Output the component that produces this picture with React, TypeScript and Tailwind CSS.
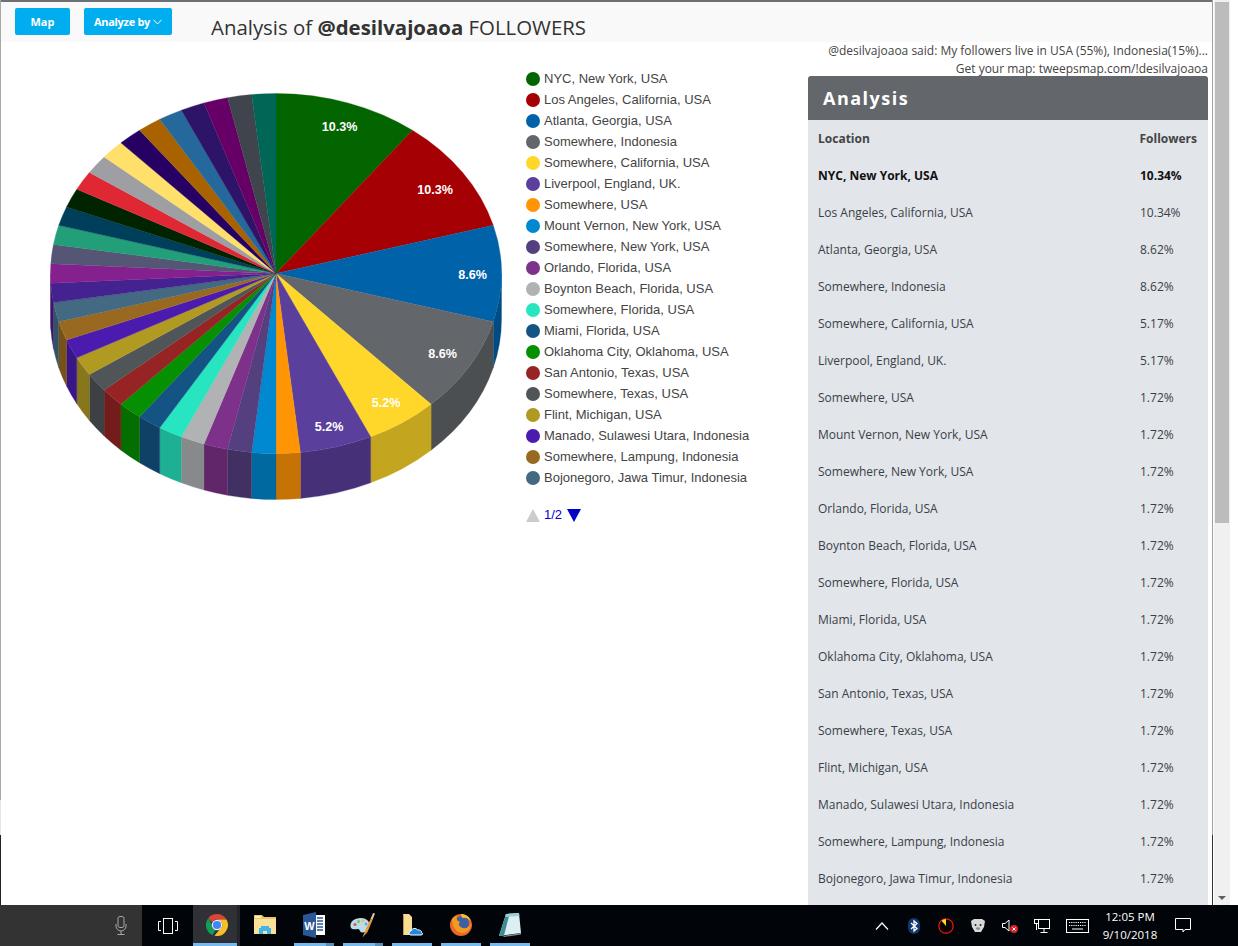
import React from 'react';

const legend = [
  ['NYC, New York, USA', '#026500', '10.34%'],
  ['Los Angeles, California, USA', '#A50003', '10.34%'],
  ['Atlanta, Georgia, USA', '#0062A8', '8.62%'],
  ['Somewhere, Indonesia', '#63666A', '8.62%'],
  ['Somewhere, California, USA', '#FFD62A', '5.17%'],
  ['Liverpool, England, UK.', '#5B3F9D', '5.17%'],
  ['Somewhere, USA', '#FF9505', '1.72%'],
  ['Mount Vernon, New York, USA', '#0089D0', '1.72%'],
  ['Somewhere, New York, USA', '#54407F', '1.72%'],
  ['Orlando, Florida, USA', '#7E318A', '1.72%'],
  ['Boynton Beach, Florida, USA', '#B0B2B3', '1.72%'],
  ['Somewhere, Florida, USA', '#26E5C0', '1.72%'],
  ['Miami, Florida, USA', '#135485', '1.72%'],
  ['Oklahoma City, Oklahoma, USA', '#068F00', '1.72%'],
  ['San Antonio, Texas, USA', '#962424', '1.72%'],
  ['Somewhere, Texas, USA', '#505558', '1.72%'],
  ['Flint, Michigan, USA', '#B19A22', '1.72%'],
  ['Manado, Sulawesi Utara, Indonesia', '#4B1BB0', '1.72%'],
  ['Somewhere, Lampung, Indonesia', '#9A6921', '1.72%'],
  ['Bojonegoro, Jawa Timur, Indonesia', '#436A82', '1.72%'],
];

// the 16 slices of page two of the legend
const moreColors = [
  '#44228F', '#85208F', '#555676', '#229E78', '#003F5C', '#002400', '#E02835', '#9D9FA2',
  '#FFE06B', '#260062', '#A86200', '#24689C', '#2E1468', '#660066', '#3F444D', '#006655',
];

const counts = [6, 6, 5, 5, 3, 3];
const cx = 276;
const cy = 273.5;
const rx = 225.5;
const ry = 180;
const depth = 46;

function pt(deg: number, dy = 0) {
  const r = (deg * Math.PI) / 180;
  return `${(cx + rx * Math.sin(r)).toFixed(2)} ${(cy - ry * Math.cos(r) + dy).toFixed(2)}`;
}

function darken(hex: string) {
  const n = parseInt(hex.slice(1), 16);
  const c = (v: number) => Math.round(v * 0.77).toString(16).padStart(2, '0');
  return `#${c(n >> 16)}${c((n >> 8) & 255)}${c(n & 255)}`;
}

function buildSlices() {
  const colors = [...legend.map((l) => l[1]), ...moreColors];
  let at = 0;
  return colors.map((color, i) => {
    const a = (at / 58) * 360;
    at += counts[i] ?? 1;
    const b = (at / 58) * 360;
    return { color, a, b };
  });
}

function Pie() {
  const slices = buildSlices();
  const labels = [
    ['10.3%', 339.5, 131], ['10.3%', 435, 194], ['8.6%', 472.5, 279],
    ['8.6%', 442.5, 358], ['5.2%', 386, 407], ['5.2%', 329, 431],
  ] as const;
  return (
    <svg width="480" height="430" viewBox="40 84 480 430" className="ml-[39px] mt-[42px] shrink-0">
      {slices.map((s, i) => {
        const a = Math.max(s.a, 90);
        const b = Math.min(s.b, 270);
        if (a >= b) return null;
        const d = `M${pt(a)} A${rx} ${ry} 0 0 1 ${pt(b)} L${pt(b, depth)} A${rx} ${ry} 0 0 0 ${pt(a, depth)} Z`;
        return <path key={i} d={d} fill={darken(s.color)} stroke={darken(s.color)} strokeWidth="0.3" />;
      })}
      {slices.map((s, i) => (
        <path
          key={i}
          d={`M${cx} ${cy} L${pt(s.a)} A${rx} ${ry} 0 0 1 ${pt(s.b)} Z`}
          fill={s.color}
          stroke={s.color}
          strokeWidth="0.3"
        />
      ))}
      {labels.map(([t, x, y], i) => (
        <text
          key={i}
          x={x}
          y={y}
          textAnchor="middle"
          fill="#fff"
          className="font-['Liberation_Sans',sans-serif] text-[12.6px] font-bold"
        >
          {t}
        </text>
      ))}
    </svg>
  );
}

function Legend() {
  return (
    <div className="ml-[6px] pt-[26px] font-['Liberation_Sans',sans-serif] text-[13px] text-[#444]">
      {legend.map(([name, color]) => (
        <div key={name} className="flex h-[21px] items-center whitespace-nowrap">
          <span className="mr-[4px] h-[14px] w-[14px] rounded-full" style={{ background: color }} />
          {name}
        </div>
      ))}
      <div className="mt-[19px] flex h-[16px] items-center text-[#0000d0]">
        <svg width="14" height="13" viewBox="0 0 14 13"><path d="M7 0 L14 13 L0 13 Z" fill="#ccc" /></svg>
        <span className="ml-[4px] mr-[5px]">1/2</span>
        <svg width="14" height="13" viewBox="0 0 14 13"><path d="M0 0 L14 0 L7 13 Z" fill="#0000c8" /></svg>
      </div>
    </div>
  );
}

function AnalysisPanel() {
  return (
    <div className="flex w-[400px] shrink-0 flex-col">
      <div className="h-[34px] text-right text-[12px] leading-[18px] text-[#444]">
        <div className="whitespace-nowrap">@desilvajoaoa said: My followers live in USA (55%), Indonesia(15%)...</div>
        <div className="whitespace-nowrap">Get your map: tweepsmap.com/!desilvajoaoa</div>
      </div>
      <div className="flex h-[44px] items-center rounded-t-[3px] bg-[#63666A] pl-[15px] text-[18px] font-bold tracking-[1.5px] text-white">
        Analysis
      </div>
      <div className="flex-1 overflow-hidden bg-[#E2E5EA] text-[12px] text-[#3a3f47]">
        <div className="flex h-[37px] items-center justify-between pl-[10px] pr-[11px] font-bold text-[#444]">
          <span>Location</span>
          <span>Followers</span>
        </div>
        {legend.map(([name, , pct], i) => (
          <div key={name} className={`flex h-[37px] items-center pl-[10px] ${i === 0 ? 'font-bold text-[#111]' : ''}`}>
            <span className="w-[322px] whitespace-nowrap">{name}</span>
            <span>{pct}</span>
          </div>
        ))}
      </div>
    </div>
  );
}

function ChromeIcon() {
  return (
    <svg width="24" height="24" viewBox="0 0 24 24">
      <path d="M12 1 A11 11 0 0 1 21.5 6.5 L12 6.5 A5.5 5.5 0 0 0 7 9.5 L3.2 5.2 A11 11 0 0 1 12 1 Z" fill="#DB4437" />
      <path d="M3.2 5.2 L7.2 12 A5 5 0 0 0 10.5 17.3 L7.6 22.1 A11 11 0 0 1 3.2 5.2 Z" fill="#0F9D58" />
      <path d="M21.5 6.5 A11 11 0 0 1 9.5 22.7 L14.8 16.3 A5 5 0 0 0 16.3 9 L12 6.5 Z" fill="#F6BF26" />
      <circle cx="12" cy="12" r="5.2" fill="#f1f1f1" />
      <circle cx="12" cy="12" r="4.1" fill="#4285F4" />
    </svg>
  );
}

function FolderIcon() {
  return (
    <svg width="24" height="24" viewBox="0 0 24 24">
      <path d="M1 2 H9 L11 4 H23 V21 H1 Z" fill="#E8C766" />
      <path d="M1 6 H23 V21 H1 Z" fill="#FBE09A" />
      <path d="M2 3 H8 V5 H2 Z" fill="#fff3c4" />
      <path d="M6 21 V15 H8 V13 H16 V15 H18 V21 H14 V18 H10 V21 Z" fill="#3FB5EA" />
    </svg>
  );
}

function WordIcon() {
  return (
    <svg width="24" height="26" viewBox="0 0 24 26">
      <path d="M9 3 H23 V23 H9 Z" fill="#fff" />
      <path d="M15 6 H21 M15 9 H21 M15 12 H21 M15 15 H21 M15 18 H21" stroke="#2B5797" strokeWidth="1.3" />
      <path d="M1 3 L14 0 V26 L1 23 Z" fill="#2B5797" />
      <text x="7.5" y="17.5" textAnchor="middle" fill="#fff" className="font-['Liberation_Sans',sans-serif] text-[11px] font-bold">W</text>
    </svg>
  );
}

function PaintIcon() {
  return (
    <svg width="26" height="26" viewBox="0 0 26 26">
      <path d="M11 6 C4 6 0 10 0.5 14.5 C1 18 5 17.5 8 17 C10 17 9.5 20 12 20.5 C16 21 19.5 17 19.5 13 C19.5 9 16 6 11 6 Z" fill="#BBDDEA" />
      <circle cx="5" cy="12.5" r="1.6" fill="#E0584F" />
      <circle cx="8.5" cy="9.5" r="1.6" fill="#7CC36A" />
      <circle cx="13" cy="9" r="1.5" fill="#E6C64A" />
      <circle cx="16" cy="12" r="1.3" fill="#6C9BD1" />
      <path d="M12.5 25.5 L15 19 L20.5 7 L22.5 8 L17.5 20 Z" fill="#E79A3A" />
      <path d="M20.5 7 L23 1 L25 1.5 L22.5 8 Z" fill="#D9C7A8" />
    </svg>
  );
}

function CloudFolderIcon() {
  return (
    <svg width="24" height="24" viewBox="0 0 24 24">
      <path d="M3 1 H9 L12 4 V22 H3 Z" fill="#F8DC92" />
      <path d="M3 1 V22 H4 V2 Z" fill="#B89A50" />
      <path d="M11 22 C8.5 22 8.5 18.5 11 18 C12 15 16 14.5 17.5 17 C20 16.5 22 18 21.5 19.5 C23 20 23 22 21 22 Z" fill="#1E88E5" stroke="#fff" strokeWidth="1" />
    </svg>
  );
}

function FirefoxIcon() {
  return (
    <svg width="24" height="24" viewBox="0 0 24 24">
      <circle cx="12" cy="12" r="11" fill="#E8672A" />
      <circle cx="13" cy="10" r="7" fill="#3C5FA8" />
      <path d="M3 6 C3 14 7 20 14 20 C19 20 22 15 22 10 C21 14 17 16 14 15 C10 14 9 11 11 9 C9 8 7 7 8 3 C5 3.5 4 5 3 6 Z" fill="#F29A1F" />
      <path d="M12 1 C16 1 20 3 22 8 C19 5 16 4 13 5 Z" fill="#F4C430" />
    </svg>
  );
}

function NotepadIcon() {
  return (
    <svg width="24" height="26" viewBox="0 0 24 26">
      <path d="M8 2 L21 1 L23 21 L1 24 Z" fill="#DCEFF2" />
      <path d="M8 2 L1 24 L6 23.5 L11 4 Z" fill="#3E8C96" />
      <path d="M8 2 L21 1 L21.3 4 L7.2 5 Z" fill="#9BD0D8" />
      <path d="M5 24 L23 21 L23 22.5 L6 25 Z" fill="#8a8a8a" />
    </svg>
  );
}

function AppSlot({ children, bar, split }: { children: React.ReactNode; bar?: boolean; split?: boolean }) {
  return (
    <div className="relative flex h-full w-[49px] shrink-0 items-center justify-center pb-[1px]">
      {children}
      {bar && (
        <div className="absolute bottom-0 left-[5px] flex h-[3px] w-[40px] bg-[#76b9ed]">
          {split && <div className="ml-auto h-full w-[8px] bg-[#5a8fb8]" />}
        </div>
      )}
    </div>
  );
}

function TraySlot({ children, w = 'w-[32px]' }: { children: React.ReactNode; w?: string }) {
  return <div className={`flex h-full shrink-0 items-center justify-center ${w}`}>{children}</div>;
}

function Taskbar() {
  return (
    <div className="flex h-[41px] bg-[#010409]">
      <div className="flex h-full w-[142px] shrink-0 items-center justify-end bg-[#333] pr-[15px]">
        <svg width="12" height="19" viewBox="0 0 12 19" fill="none" stroke="#a8a8a8" strokeWidth="1">
          <rect x="3" y="0.5" width="6" height="11" rx="2" />
          <path d="M1 8 V10 A5 5 0 0 0 11 10 V8 M6 15 V18 M2.5 18.5 H9.5" />
        </svg>
      </div>
      <div className="flex h-full w-[51px] shrink-0 items-center justify-center">
        <svg width="20" height="16" viewBox="0 0 20 16" fill="none" stroke="#fff" strokeWidth="1">
          <rect x="5.5" y="0.5" width="9" height="15" />
          <path d="M3 3.5 H0.5 V12.5 H3 M17 3.5 H19.5 V12.5 H17" />
        </svg>
      </div>
      <div className="relative flex h-full w-[47px] shrink-0 items-center justify-center bg-[#2f3136] pb-[1px]">
        <ChromeIcon />
        <div className="absolute bottom-0 left-0 h-[3px] w-full bg-[#76b9ed]" />
        <div className="absolute right-0 top-0 h-full w-[3px] bg-[#232427]" />
      </div>
      <AppSlot><FolderIcon /></AppSlot>
      <AppSlot bar split><WordIcon /></AppSlot>
      <AppSlot bar split><PaintIcon /></AppSlot>
      <AppSlot bar><CloudFolderIcon /></AppSlot>
      <AppSlot bar><FirefoxIcon /></AppSlot>
      <AppSlot bar><NotepadIcon /></AppSlot>

      <div className="ml-auto flex h-full pr-[36px]">
        <TraySlot>
          <svg width="14" height="8" viewBox="0 0 14 8" fill="none" stroke="#fff" strokeWidth="1.2"><path d="M1 7.5 L7 1 L13 7.5" /></svg>
        </TraySlot>
        <TraySlot>
          <svg width="12" height="16" viewBox="0 0 12 16">
            <rect width="12" height="16" rx="6" fill="#12366f" />
            <path d="M3 5 L9 10.5 L6 13 V3 L9 5.5 L3 11" fill="none" stroke="#fff" strokeWidth="1.3" />
          </svg>
        </TraySlot>
        <TraySlot>
          <svg width="16" height="16" viewBox="0 0 16 16">
            <circle cx="8" cy="8" r="7.2" fill="#0a0000" stroke="#f01818" strokeWidth="1.2" />
            <path d="M8 8 L3.5 2.8 A7 7 0 0 1 8 1 Z" fill="#f0e020" />
          </svg>
        </TraySlot>
        <TraySlot>
          <svg width="16" height="14" viewBox="0 0 16 14">
            <path d="M1 2 L4 0 L12 0 L15 2 L14 8 L11 13 L5 13 L2 8 Z" fill="#d8d8d8" />
            <circle cx="5.5" cy="6" r="1" fill="#222" />
            <circle cx="10.5" cy="6" r="1" fill="#222" />
            <ellipse cx="8" cy="9.5" rx="2" ry="1.3" fill="#888" />
          </svg>
        </TraySlot>
        <TraySlot>
          <svg width="16" height="14" viewBox="0 0 16 14">
            <path d="M0.5 4.5 H3 L7 1 V12 L3 8.5 H0.5 Z" fill="none" stroke="#fff" strokeWidth="1" />
            <circle cx="12" cy="10" r="4" fill="#d8232a" />
            <path d="M10.5 8.5 L13.5 11.5 M13.5 8.5 L10.5 11.5" stroke="#fff" strokeWidth="1" />
          </svg>
        </TraySlot>
        <TraySlot>
          <svg width="16" height="14" viewBox="0 0 16 14" fill="none" stroke="#fff" strokeWidth="1">
            <rect x="4.5" y="0.5" width="11" height="9" />
            <rect x="0.5" y="0.5" width="4" height="4" fill="#010409" />
            <path d="M2.5 4.5 V11 M10 9.5 V13 M6.5 13.5 H13.5" />
          </svg>
        </TraySlot>
        <TraySlot w="w-[38px]">
          <svg width="23" height="14" viewBox="0 0 23 14" fill="none" stroke="#fff" strokeWidth="1">
            <rect x="0.5" y="0.5" width="22" height="13" />
            <path d="M3 3.5 H20 M3 6.5 H20" strokeDasharray="1.2 1" />
            <path d="M6 10 H17" />
          </svg>
        </TraySlot>
        <div className="flex h-full w-[68px] shrink-0 flex-col items-center justify-center text-[11.5px] leading-[18px] text-white">
          <span>12:05 PM</span>
          <span>9/10/2018</span>
        </div>
        <TraySlot w="w-[38px]">
          <svg width="16" height="15" viewBox="0 0 16 15" fill="none" stroke="#fff" strokeWidth="1">
            <path d="M0.5 0.5 H15.5 V11.5 H10 L8 14 L8 11.5 H0.5 Z" />
          </svg>
        </TraySlot>
      </div>
    </div>
  );
}

export default function App() {
  return (
    <div className="flex h-[946px] w-[1238px] flex-col overflow-hidden bg-white font-['Open_Sans',sans-serif]">
      <div className="flex h-[905px]">
        <div className="flex w-px flex-col">
          <div className="h-[800px] bg-[#a8a8a8]" />
          <div className="h-[35px] bg-[#e4e6f0]" />
          <div className="flex-1 bg-[#222]" />
        </div>
        <div className="flex w-[1211px] flex-col">
          <div className="h-[2px] bg-[#6d7175]" />
          <div className="flex h-[40px] items-start bg-[#f9f9f9] pl-[14px] pt-[6px]">
            <div className="flex h-[27px] w-[55px] items-center justify-center rounded-[2px] bg-[#00AEEF] pt-[1px] text-[11px] font-bold text-white">
              Map
            </div>
            <div className="ml-[14px] flex h-[27px] w-[88px] items-center justify-center gap-[3px] rounded-[2px] bg-[#00AEEF] pt-[1px] text-[11px] font-bold tracking-[-0.3px] text-white">
              Analyze by
              <svg width="9" height="6" viewBox="0 0 9 6" fill="none" stroke="#fff" strokeWidth="1"><path d="M0.5 0.8 L4.5 5 L8.5 0.8" /></svg>
            </div>
            <div className="ml-[39px] pt-[6px] text-[20.4px] leading-[26px] text-[#333]">
              Analysis of <span className="font-bold">@desilvajoaoa</span> FOLLOWERS
            </div>
          </div>
          <div className="flex min-h-0 flex-1">
            <div className="flex w-[807px] shrink-0 items-start">
              <Pie />
              <Legend />
            </div>
            <AnalysisPanel />
          </div>
        </div>
        <div className="flex w-px flex-col">
          <div className="h-[835px] bg-[#a0a0a0]" />
          <div className="flex-1 bg-[#333]" />
        </div>
        <div className="ml-px flex h-full w-[16px] flex-col bg-[#f0f0f0] pt-[2px]">
          <div className="mx-auto h-[521px] w-[14px] bg-[#bcbcbc]" />
          <div className="mx-auto mt-auto mb-[5px] h-0 w-0 border-x-[4px] border-t-[4px] border-x-transparent border-t-[#606060]" />
        </div>
      </div>
      <Taskbar />
    </div>
  );
}
